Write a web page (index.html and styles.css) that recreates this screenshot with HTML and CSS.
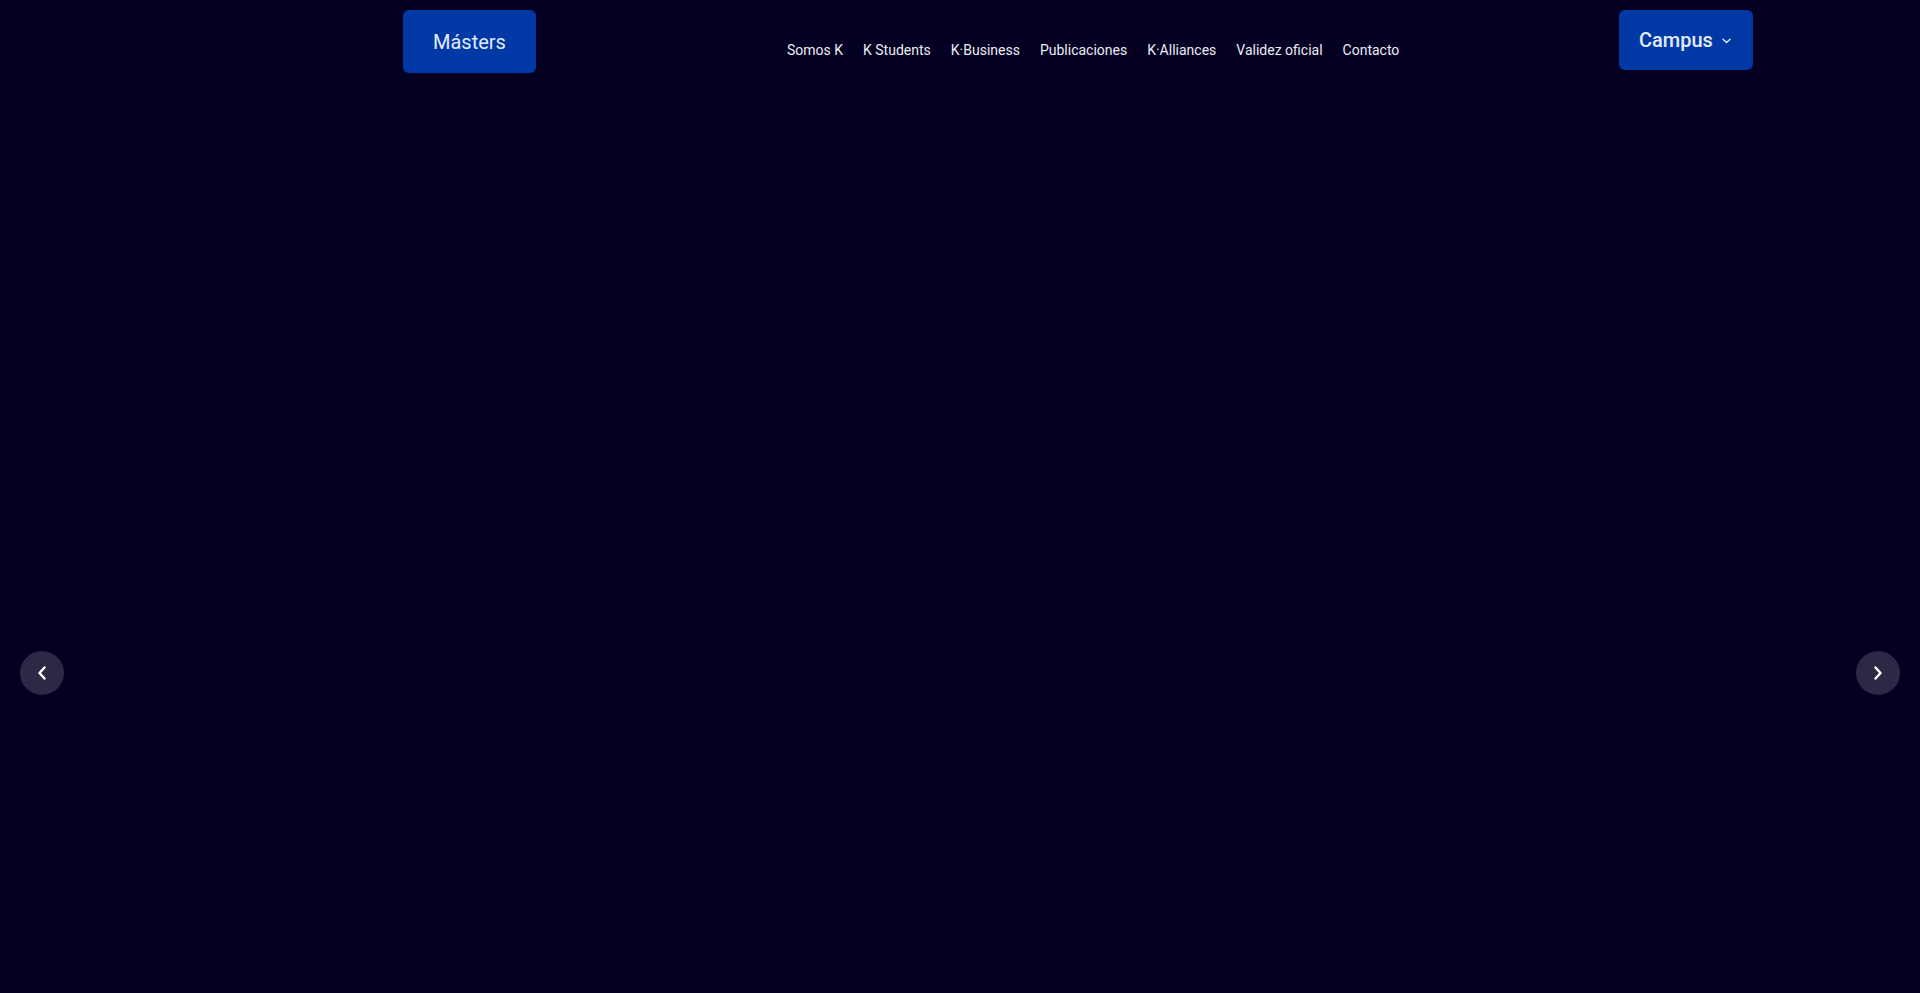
FILE: index.html
```html
<!DOCTYPE html>
<html lang="es">
<head>
<meta charset="utf-8">
<title>Másters</title>
<link rel="stylesheet" href="styles.css">
</head>
<body>
<div class="slider">
  <header class="header">
    <a class="btn btn-masters" href="#">Másters</a>
    <nav class="nav">
      <a href="#">Somos K</a>
      <a href="#">K Students</a>
      <a href="#">K·Business</a>
      <a href="#">Publicaciones</a>
      <a href="#">K·Alliances</a>
      <a href="#">Validez oficial</a>
      <a href="#">Contacto</a>
    </nav>
    <a class="btn btn-campus" href="#">Campus
      <svg class="caret" width="9" height="6" viewBox="0 0 9 6"><path d="M1 1.2 L4.5 4.6 L8 1.2" fill="none" stroke="#dfe8fb" stroke-width="1.4" stroke-linecap="round" stroke-linejoin="round"/></svg>
    </a>
  </header>
  <button class="arrow arrow-prev" aria-label="Anterior">
    <svg width="12" height="14" viewBox="0 0 12 14"><path d="M8.5 1.5 L3.5 7 L8.5 12.5" fill="none" stroke="#ffffff" stroke-width="2.4" stroke-linecap="round" stroke-linejoin="round"/></svg>
  </button>
  <button class="arrow arrow-next" aria-label="Siguiente">
    <svg width="12" height="14" viewBox="0 0 12 14"><path d="M3.5 1.5 L8.5 7 L3.5 12.5" fill="none" stroke="#ffffff" stroke-width="2.4" stroke-linecap="round" stroke-linejoin="round"/></svg>
  </button>
</div>
</body>
</html>
```
FILE: styles.css
```css
html, body {
  margin: 0;
  padding: 0;
  background: #030021;
  font-family: Roboto, "Liberation Sans", Arial, sans-serif;
}

.slider {
  position: relative;
  height: 993px;
  overflow: hidden;
  background: #030021;
}

.header {
  display: flex;
  align-items: flex-start;
  padding: 10px 167px 0 403px;
}

.btn {
  display: flex;
  align-items: center;
  justify-content: center;
  background: #0039a6;
  color: #e4ecfb;
  text-decoration: none;
  border-radius: 6px;
  box-sizing: border-box;
}

.btn-masters {
  width: 133px;
  height: 63px;
  font-size: 20px;
  font-weight: 400;
}

.btn-campus {
  width: 134px;
  height: 60px;
  margin-left: auto;
  font-size: 20px;
  font-weight: 500;
  justify-content: flex-start;
  padding-left: 20px;
  gap: 9px;
}

.caret {
  margin-top: 1px;
}

.nav {
  display: flex;
  gap: 20px;
  margin-left: 251px;
  padding-top: 30px;
}

.nav a {
  color: #ececf4;
  text-decoration: none;
  font-size: 14px;
  line-height: 20px;
}

.arrow {
  position: absolute;
  top: 651px;
  width: 44px;
  height: 44px;
  border: 0;
  padding: 0;
  border-radius: 50%;
  background: #2b2945;
  display: flex;
  align-items: center;
  justify-content: center;
  cursor: pointer;
}

.arrow-prev { left: 20px; }
.arrow-next { left: 1856px; }
```
